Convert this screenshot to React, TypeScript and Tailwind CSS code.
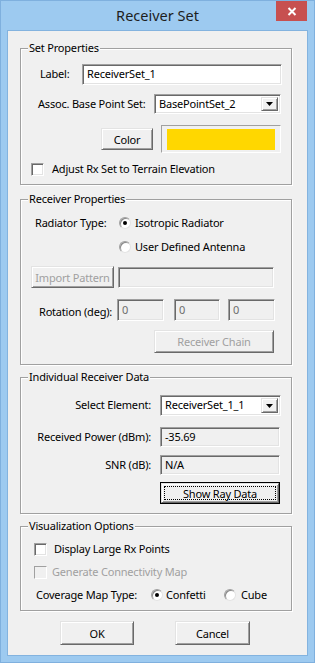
import React from 'react';

const raised =
  'bg-[#f0f0f0] border border-t-[#e3e3e3] border-l-[#e3e3e3] border-r-[#696969] border-b-[#696969] shadow-[inset_1px_1px_0_#ffffff,inset_-1px_-1px_0_#a0a0a0]';
const sunken =
  'border border-t-[#a0a0a0] border-l-[#a0a0a0] border-r-white border-b-white shadow-[inset_1px_1px_0_#696969,inset_-1px_-1px_0_#e3e3e3]';

const Group: React.FC<{ title: string; className?: string; children: React.ReactNode }> = ({ title, className, children }) => (
  <div
    className={`relative w-[272px] border border-[#a0a0a0] shadow-[1px_1px_0_#ffffff,inset_1px_1px_0_#ffffff] ${className ?? ''}`}
  >
    <span className="absolute left-[7px] top-[-9px] px-[1px] bg-[#f0f0f0] leading-[16px]">{title}</span>
    {children}
  </div>
);

const Button: React.FC<{ label: string; className?: string; disabled?: boolean }> = ({ label, className, disabled }) => (
  <div
    className={`${raised} flex items-center justify-center leading-none ${disabled ? 'text-[#a0a0a0]' : 'text-black'} ${className ?? ''}`}
  >
    {label}
  </div>
);

const Field: React.FC<{ value?: string; className?: string; disabled?: boolean; readOnly?: boolean; top?: boolean }> = ({
  value,
  className,
  disabled,
  readOnly,
  top,
}) => (
  <div
    className={`${sunken} flex ${top ? 'items-start pt-[2px]' : 'items-center'} pl-[4px] ${
      disabled || readOnly ? 'bg-[#f0f0f0]' : 'bg-white'
    } ${disabled ? 'text-[#6d6d6d]' : 'text-black'} ${className ?? ''}`}
  >
    {value}
  </div>
);

const Select: React.FC<{ value: string; className?: string }> = ({ value, className }) => (
  <div className={`${sunken} bg-white flex items-stretch p-[2px] ${className ?? ''}`}>
    <div className="flex-1 flex items-center pl-[2px]">{value}</div>
    <div className={`${raised} w-[17px] flex items-center justify-center`}>
      <svg width="7" height="4" viewBox="0 0 7 4">
        <polygon points="0,0 7,0 3.5,4" fill="#000" />
      </svg>
    </div>
  </div>
);

const Radio: React.FC<{ checked?: boolean }> = ({ checked }) => (
  <div className="w-[12px] h-[12px] rounded-full bg-white border border-t-[#a0a0a0] border-l-[#a0a0a0] border-r-[#e3e3e3] border-b-[#e3e3e3] shadow-[inset_1px_1px_0_#8a8a8a] flex items-center justify-center shrink-0">
    {checked && <div className="w-[4px] h-[4px] rounded-full bg-black" />}
  </div>
);

const Check: React.FC<{ disabled?: boolean }> = ({ disabled }) => (
  <div
    className={`w-[13px] h-[13px] shrink-0 ${sunken} ${disabled ? 'bg-[#f0f0f0] border-[#c8c8c8] shadow-none' : 'bg-white'}`}
  />
);

export default function App() {
  return (
    <div className="w-[315px] h-[663px] bg-[#9dcaf0] border border-[#7fb0de] flex flex-col font-['Noto_Sans',sans-serif] text-[11px] tracking-[-0.2px] text-black whitespace-nowrap select-none">
      {/* title bar */}
      <div className="relative h-[29px] flex items-center justify-center">
        <span className="text-[14.5px] tracking-normal text-[#1e1e1e] leading-none">Receiver Set</span>
        <div className="absolute right-[7px] top-0 w-[31px] h-[20px] bg-[#c75050] flex items-center justify-center">
          <svg width="10" height="9" viewBox="0 0 10 9">
            <path d="M1.5 1 L8.5 8 M8.5 1 L1.5 8" stroke="#fff" strokeWidth="2" />
          </svg>
        </div>
      </div>

      {/* client area */}
      <div className="mx-[6px] h-[626px] border border-[#83b3df] bg-[#f0f0f0] pl-[12px] pt-[17px]">
        <Group title="Set Properties" className="h-[137px]">
          <div className="mt-[15px] h-[21px] flex items-center pl-[19px]">
            <span className="w-[42px]">Label:</span>
            <Field value="ReceiverSet_1" className="w-[200px] h-[21px]" />
          </div>
          <div className="mt-[9px] h-[20px] flex items-center pl-[17px]">
            <span className="w-[116px]">Assoc. Base Point Set:</span>
            <Select value="BasePointSet_2" className="w-[127px] h-[20px]" />
          </div>
          <div className="mt-[11px] h-[28px] flex items-center pl-[80px]">
            <Button label="Color" className="w-[52px] h-[22px]" />
            <div className="ml-[8px] w-[120px] h-[28px] border border-t-[#a0a0a0] border-l-[#a0a0a0] border-r-white border-b-white px-[5px] pt-[3px] pb-[2px]">
              <div className="w-full h-full bg-[#ffd700]" />
            </div>
          </div>
          <div className="mt-[10px] h-[13px] flex items-center pl-[10px]">
            <Check />
            <span className="ml-[8px]">Adjust Rx Set to Terrain Elevation</span>
          </div>
        </Group>

        <Group title="Receiver Properties" className="mt-[14px] h-[166px]">
          <div className="mt-[16px] h-[14px] flex items-center pl-[14px]">
            <span className="w-[84px]">Radiator Type:</span>
            <Radio checked />
            <span className="ml-[4px]">Isotropic Radiator</span>
          </div>
          <div className="mt-[10px] h-[14px] flex items-center pl-[98px]">
            <Radio />
            <span className="ml-[4px]">User Defined Antenna</span>
          </div>
          <div className="mt-[12px] h-[22px] flex items-center pl-[10px]">
            <Button label="Import Pattern" disabled className="w-[83px] h-[22px]" />
            <Field disabled className="ml-[4px] w-[156px] h-[21px]" />
          </div>
          <div className="mt-[11px] h-[22px] flex items-start pl-[18px]">
            <span className="w-[78px] pt-[5px] leading-[16px]">Rotation (deg):</span>
            <Field value="0" disabled top className="w-[47px] h-[22px]" />
            <Field value="0" disabled top className="ml-[10px] w-[46px] h-[22px]" />
            <Field value="0" disabled top className="ml-[8px] w-[47px] h-[22px]" />
          </div>
          <div className="mt-[9px] h-[23px] flex items-center pl-[133px]">
            <Button label="Receiver Chain" disabled className="w-[120px] h-[23px]" />
          </div>
        </Group>

        <Group title="Individual Receiver Data" className="mt-[12px] h-[137px]">
          <div className="mt-[17px] h-[21px] flex items-center">
            <span className="w-[130px] text-right">Select Element:</span>
            <Select value="ReceiverSet_1_1" className="ml-[9px] w-[121px] h-[21px]" />
          </div>
          <div className="mt-[11px] h-[20px] flex items-center">
            <span className="w-[130px] text-right">Received Power (dBm):</span>
            <Field value="-35.69" readOnly className="ml-[9px] w-[120px] h-[20px]" />
          </div>
          <div className="mt-[8px] h-[20px] flex items-center">
            <span className="w-[130px] text-right">SNR (dB):</span>
            <Field value="N/A" readOnly className="ml-[9px] w-[120px] h-[20px]" />
          </div>
          <div className="mt-[7px] h-[22px] flex items-center pl-[139px]">
            <div className="relative w-[120px] h-[22px] border border-black flex">
              <Button label="Show Ray Data" className="flex-1" />
              <div className="absolute inset-[3px] border border-dotted border-black" />
            </div>
          </div>
        </Group>

        <Group title="Visualization Options" className="mt-[12px] h-[85px]">
          <div className="mt-[16px] h-[13px] flex items-center pl-[13px]">
            <Check />
            <span className="ml-[7px]">Display Large Rx Points</span>
          </div>
          <div className="mt-[10px] h-[13px] flex items-center pl-[13px]">
            <Check disabled />
            <span className="ml-[5px] text-[#a0a0a0]">Generate Connectivity Map</span>
          </div>
          <div className="mt-[10px] h-[12px] flex items-center pl-[15px]">
            <span className="w-[115px]">Coverage Map Type:</span>
            <Radio checked />
            <span className="ml-[3px] w-[58px]">Confetti</span>
            <Radio />
            <span className="ml-[5px]">Cube</span>
          </div>
        </Group>

        <div className="mt-[10px] flex pl-[40px]">
          <Button label="OK" className="w-[74px] h-[24px]" />
          <Button label="Cancel" className="ml-[41px] w-[75px] h-[24px]" />
        </div>
      </div>
    </div>
  );
}
